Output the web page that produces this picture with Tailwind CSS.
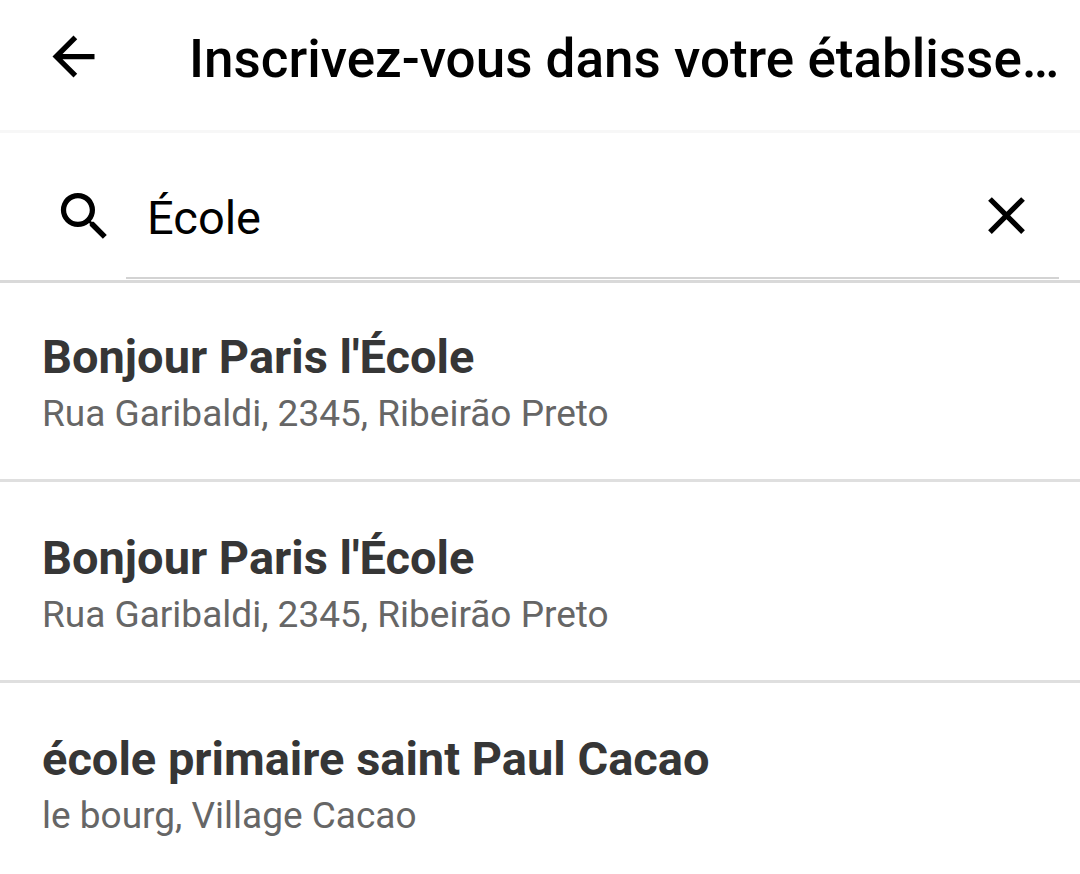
<!DOCTYPE html>
<html lang="fr">

<head>
	<meta charset="UTF-8" />
	<meta name="viewport" content="width=device-width, initial-scale=1" />
	<script src="https://cdn.jsdelivr.net/npm/@tailwindcss/browser@4"></script>
	<title>Inscrivez-vous dans votre établissement</title>
</head>

<body class="bg-white text-black font-[Roboto,sans-serif]">
	<header class="flex items-center pt-[17px] pl-[42px] pb-[35px] border-b-3 border-[#f7f7f7]">
		<button type="button" aria-label="Retour" class="shrink-0 mr-[84px]">
			<svg class="block w-[63px] h-[63px]" viewBox="0 0 24 24" fill="currentColor">
				<path d="M20 11H7.830l5.590-5.590L12 4l-8 8 8 8 1.410-1.410L7.830 13H20v-2z" />
			</svg>
		</button>
		<h1 class="pt-[6px] text-[53px] leading-[72px] font-medium whitespace-nowrap">Inscrivez-vous dans votre établisse…</h1>
	</header>

	<!-- Recherche -->
	<form class="flex items-center pl-[53px] pr-[21px] pb-px border-b-3 border-[#d9d9d9]" onsubmit="return false;">
		<label for="search" aria-label="Rechercher" class="shrink-0 pt-[21px] mr-[10px]">
			<svg class="block w-[63px] h-[63px]" viewBox="0 0 24 24" fill="currentColor">
				<path d="M15.500 14h-.790l-.280-.270A6.471 6.471 0 0 0 16 9.500 6.500 6.500 0 1 0 9.500 16c1.610 0 3.090-.590 4.230-1.570l.270.280v.790l5 4.990L20.490 19l-4.990-5zm-6 0C7.010 14 5 11.990 5 9.500S7.010 5 9.500 5 14 7.010 14 9.500 11.990 14 9.500 14z" />
			</svg>
		</label>
		<div class="flex flex-1 items-center pt-[51px] pb-[30px] border-b-2 border-[#d3d3d3] px-[21px]">
			<input id="search" name="search" type="text" value="École"
				class="flex-1 min-w-0 pt-1 text-[47px] leading-[56px] focus:outline-none" />
			<button type="button" aria-label="Effacer" class="shrink-0">
				<svg class="block w-[63px] h-[63px]" viewBox="0 0 24 24" fill="currentColor">
					<path d="M19 6.410L17.590 5 12 10.590 6.410 5 5 6.410 10.590 12 5 17.590 6.410 19 12 13.410 17.590 19 19 17.590 13.410 12z" />
				</svg>
			</button>
		</div>
	</form>

	<!-- Liste des établissements -->
	<ul class="divide-y-3 divide-[#dfdfdf]">
		<li class="px-[42px] pt-[42px] pb-[40px]">
			<h2 class="text-[47px] leading-[64px] font-bold text-[#363636]">Bonjour Paris l'École</h2>
			<p class="text-[37px] leading-[50px] text-[#666]">Rua Garibaldi, 2345, Ribeirão Preto</p>
		</li>
		<li class="px-[42px] pt-[44px] pb-[40px]">
			<h2 class="text-[47px] leading-[64px] font-bold text-[#363636]">Bonjour Paris l'École</h2>
			<p class="text-[37px] leading-[50px] text-[#666]">Rua Garibaldi, 2345, Ribeirão Preto</p>
		</li>
		<li class="px-[42px] pt-[44px]">
			<h2 class="text-[47px] leading-[64px] font-bold text-[#363636]">école primaire saint Paul Cacao</h2>
			<p class="text-[37px] leading-[50px] text-[#666]">le bourg, Village Cacao</p>
		</li>
	</ul>
</body>

</html>
